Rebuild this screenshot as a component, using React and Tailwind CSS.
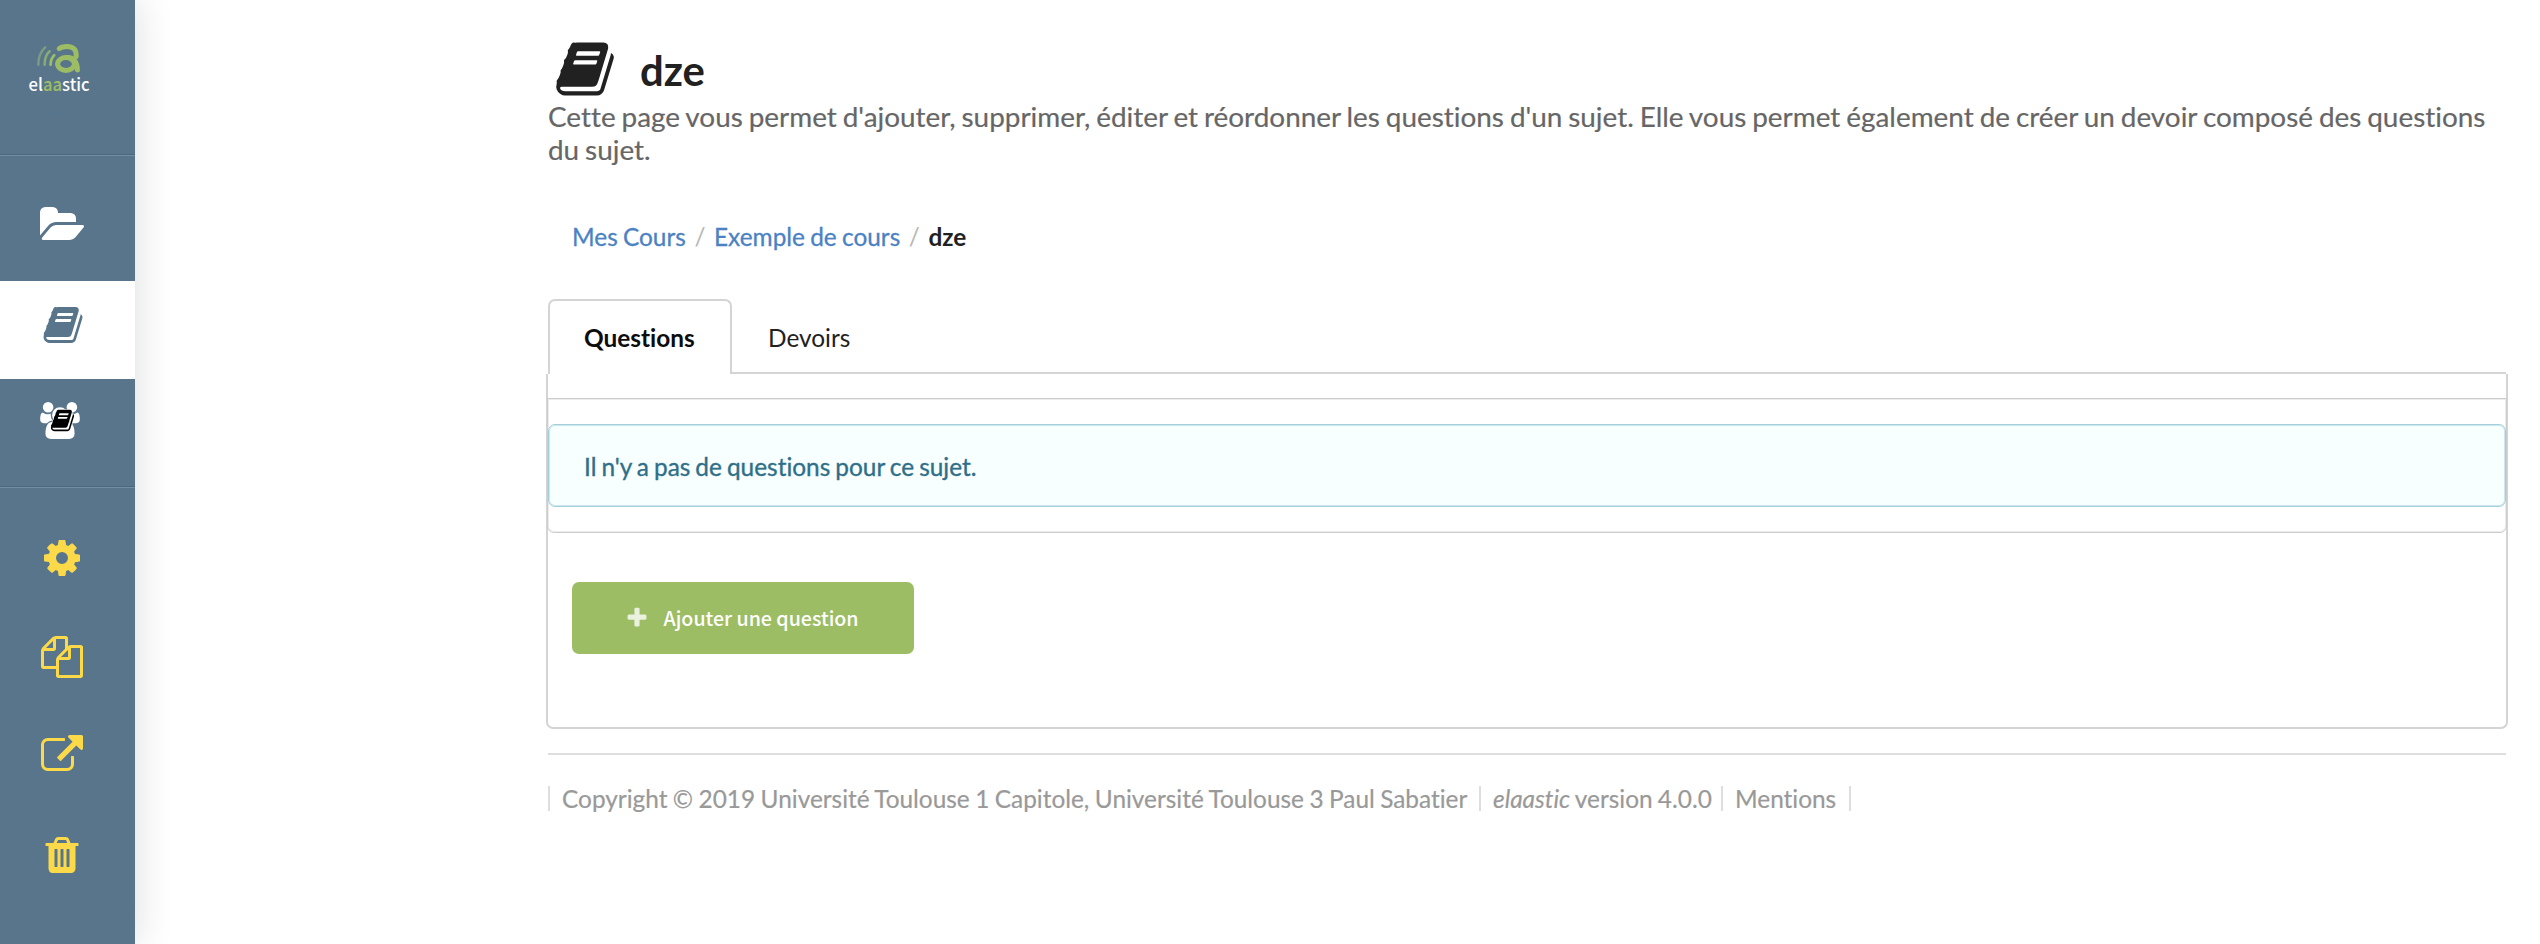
const ICONS = {
  book: "M1703 478q40 57 18 129l-275 906q-19 64-76.5 107.5t-122.5 43.5h-923q-77 0-148.5-53.5t-99.5-131.5q-24-67-2-127 0-4 3-27t4-37q1-8-3-21.5t-3-19.5q2-11 8-21t16.5-23.5 16.5-23.5q23-38 45-91.5t30-91.5q3-10 .5-30t-.5-28q3-11 17-28t17-23q21-36 42-92t25-90q1-9-2.5-32t.5-28q4-13 22-30.5t22-22.5q19-26 42.5-84.5t27.5-96.5q1-8-3-25.5t-2-26.5q2-8 9-18t18-23 17-21q8-12 16.5-30.5t15-35 16-36 19.5-32 26.5-23.5 36-11.5 47.5 5.5l-1 3q38-9 51-9h761q74 0 114 56t18 130l-274 906q-36 119-71.5 153.5t-128.5 34.5h-869q-27 0-38 15-11 16-1 43 24 70 144 70h923q29 0 56-15.5t35-41.5l300-987q7-22 5-57 38 15 59 43zm-1064 2q-4 13 2 22.5t20 9.5h608q13 0 25.5-9.5t16.5-22.5l21-64q4-13-2-22.5t-20-9.5h-608q-13 0-25.5 9.5t-16.5 22.5zm-83 256q-4 13 2 22.5t20 9.5h608q13 0 25.5-9.5t16.5-22.5l21-64q4-13-2-22.5t-20-9.5h-608q-13 0-25.5 9.5t-16.5 22.5z",
  folder: "M1879 952q0 31-31 66l-336 396q-43 51-120.5 86.5t-143.5 35.5h-1088q-34 0-60.5-13t-26.5-43q0-31 31-66l336-396q43-51 120.5-86.5t143.5-35.5h1088q34 0 60.5 13t26.5 43zm-343-344v160h-832q-94 0-197 47.5t-164 119.5l-337 396-5 6q0-4-.5-12.5t-.5-12.5v-960q0-92 66-158t158-66h320q92 0 158 66t66 158v32h544q92 0 158 66t66 158z",
  cog: "M1152 896q0-106-75-181t-181-75-181 75-75 181 75 181 181 75 181-75 75-181zm512-109v222q0 12-8 23t-20 13l-185 28q-19 54-39 91 35 50 107 138 10 12 10 25t-9 23q-27 37-99 108t-94 71q-12 0-26-9l-138-108q-44 23-91 38-16 136-29 186-7 28-36 28h-222q-14 0-24.5-8.5t-11.5-21.5l-28-184q-49-16-90-37l-141 107q-10 9-25 9-14 0-25-11-126-114-165-168-7-10-7-23 0-12 8-23 15-21 51-66.5t54-70.5q-27-50-41-99l-183-27q-13-2-21-12.5t-8-23.5v-222q0-12 8-23t19-13l186-28q14-46 39-92-40-57-107-138-10-12-10-24 0-10 9-23 26-36 98.5-107.5t94.5-71.5q13 0 26 10l138 107q44-23 91-38 16-136 29-186 7-28 36-28h222q14 0 24.5 8.5t11.5 21.5l28 184q49 16 90 37l142-107q9-9 24-9 13 0 25 10 129 119 165 170 7 8 7 22 0 12-8 23-15 21-51 66.5t-54 70.5q26 50 41 98l183 28q13 2 21 12.5t8 23.5z",
  copy: "M1696 384q40 0 68 28t28 68v1216q0 40-28 68t-68 28h-960q-40 0-68-28t-28-68v-288h-544q-40 0-68-28t-28-68v-672q0-40 20-88t48-76l408-408q28-28 76-48t88-20h416q40 0 68 28t28 68v328q68-40 128-40h416zm-544 213l-299 299h299v-299zm-640-384l-299 299h299v-299zm196 647l316-316v-416h-384v416q0 40-28 68t-68 28h-416v640h512v-256q0-40 20-88t48-76zm956 804v-1152h-384v416q0 40-28 68t-68 28h-416v640h896z",
  share: "M1408 928v320q0 119-84.5 203.5t-203.5 84.5h-832q-119 0-203.5-84.5t-84.5-203.5v-832q0-119 84.5-203.5t203.5-84.5h704q14 0 23 9t9 23v64q0 14-9 23t-23 9h-704q-66 0-113 47t-47 113v832q0 66 47 113t113 47h832q66 0 113-47t47-113v-320q0-14 9-23t23-9h64q14 0 23 9t9 23zm384-864v512q0 26-19 45t-45 19-45-19l-176-176-652 652q-10 10-23 10t-23-10l-114-114q-10-10-10-23t10-23l652-652-176-176q-19-19-19-45t19-45 45-19h512q26 0 45 19t19 45z",
  trash: "M704 1376v-704q0-14-9-23t-23-9h-64q-14 0-23 9t-9 23v704q0 14 9 23t23 9h64q14 0 23-9t9-23zm256 0v-704q0-14-9-23t-23-9h-64q-14 0-23 9t-9 23v704q0 14 9 23t23 9h64q14 0 23-9t9-23zm256 0v-704q0-14-9-23t-23-9h-64q-14 0-23 9t-9 23v704q0 14 9 23t23 9h64q14 0 23-9t9-23zm-544-992h448l-48-117q-7-9-17-11h-317q-10 2-17 11zm928 32v64q0 14-9 23t-23 9h-96v948q0 83-47 143.5t-113 60.5h-832q-66 0-113-58.5t-47-141.5v-952h-96q-14 0-23-9t-9-23v-64q0-14 9-23t23-9h309l70-167q15-37 54-63t79-26h320q40 0 79 26t54 63l70 167h309q14 0 23 9t9 23z",
  users: "M593 896q-162 5-265 128h-134q-82 0-138-40.5t-56-118.5q0-353 124-353 6 0 43.5 21t97.5 42.5 119 21.5q67 0 133-23-5 37-5 66 0 139 81 256zm1071 637q0 120-73 189.5t-194 69.5h-874q-121 0-194-69.5t-73-189.5q0-53 3.5-103.5t14-109 26.5-108.5 43-97.5 62-81 85.5-53.5 111.5-20q10 0 43 21.5t73 48 107 48 135 21.5 135-21.5 107-48 73-48 43-21.5q61 0 111.5 20t85.5 53.5 62 81 43 97.5 26.5 108.5 14 109 3.5 103.5zm-1024-1277q0 106-75 181t-181 75-181-75-75-181 75-181 181-75 181 75 75 181zm704 384q0 159-112.5 271.5t-271.5 112.5-271.5-112.5-112.5-271.5 112.5-271.5 271.5-112.5 271.5 112.5 112.5 271.5zm576 225q0 78-56 118.5t-138 40.5h-134q-103-123-265-128 81-117 81-256 0-29-5-66 66 23 133 23 59 0 119-21.5t97.5-42.5 43.5-21q124 0 124 353zm-128-609q0 106-75 181t-181 75-181-75-75-181 75-181 181-75 181 75 75 181z",
  plus: "M1600 736v192q0 40-28 68t-68 28h-416v416q0 40-28 68t-68 28h-192q-40 0-68-28t-28-68v-416h-416q-40 0-68-28t-28-68v-192q0-40 28-68t68-28h416v-416q0-40 28-68t68-28h192q40 0 68 28t28 68v416h416q40 0 68 28t28 68z",
};

function Icon({ name, wide = false, className = "" }) {
  return (
    <svg
      viewBox={wide ? "0 0 1920 1792" : "0 0 1792 1792"}
      fill="currentColor"
      aria-hidden="true"
      className={`shrink-0 overflow-visible ${className}`}
    >
      <path d={ICONS[name]} />
    </svg>
  );
}

function Logo() {
  return (
    <svg viewBox="0 0 90 90" className="ml-3.5 h-[90px] w-[90px]" role="img" aria-label="elaastic">
      <circle cx="45" cy="45" r="41" fill="none" stroke="#557d9c" strokeWidth="0.7" strokeDasharray="5 3" opacity="0.7" />
      <g fill="none" strokeLinecap="round">
        <path d="M24.3 36.8C24.3 29 26.3 23.5 31.2 19.3" stroke="#7b9d80" strokeWidth="2.4" />
        <path d="M30.6 36.8C30.6 31 32 26.5 35.6 23.3" stroke="#8aac74" strokeWidth="2.5" />
        <path d="M36.6 36.8C36.6 33 37.6 29.8 40.2 27.2" stroke="#9bbf63" strokeWidth="2.7" />
        <path d="M45.2 20.6C47 19 50 18.4 53 18.4C60 18.4 62.6 22.5 62.2 28.5" stroke="#9dbd64" strokeWidth="5" />
        <ellipse cx="52" cy="36" rx="8.4" ry="6.4" stroke="#9dbd64" strokeWidth="5" />
        <path d="M53 29.6C60 29.4 63.3 34 63.4 42" stroke="#9dbd64" strokeWidth="5" />
      </g>
      <text x="14.6" y="63" fill="#fff" fontSize="17.2" fontWeight="500" fontFamily="'Noto Sans CJK SC', sans-serif" textLength="61" lengthAdjust="spacingAndGlyphs">
        el<tspan fill="#9dbd64">aa</tspan>stic
      </text>
    </svg>
  );
}

function Sidebar() {
  return (
    <aside className="h-full w-[135px] shrink-0 bg-[#58758c] shadow-[0_0_36px_rgba(34,36,38,0.16)]">
      <div className="h-[155px] border-b border-[#4a6880] pt-7">
        <Logo />
      </div>
      <nav className="flex flex-col">
        <a className="flex h-[126px] justify-center border-t border-[#748da1] pr-2.5 pt-[48px] text-white">
          <Icon name="folder" wide className="h-[42px] w-[45px]" />
        </a>
        <a className="flex h-[98px] justify-center bg-white pr-2.5 pt-[22.5px] text-[#58758c]">
          <Icon name="book" className="size-[42px]" />
        </a>
        <a className="flex h-[108px] border-b border-[#4a6880] pl-[39.5px] pt-[23px] text-white">
          <span className="relative h-[37px] w-[40px]">
            <Icon name="users" wide className="h-[37px] w-[40px]" />
            <Icon name="book" className="absolute left-[10px] top-[6px] size-[25px] stroke-white stroke-[90px] text-black [paint-order:stroke]" />
          </span>
        </a>
        <a className="flex h-[101px] justify-center border-t border-[#748da1] pr-[11px] pt-[48.5px] text-[#fbd949]">
          <Icon name="cog" className="size-[42px]" />
        </a>
        <a className="flex h-[99px] justify-center pr-[11px] pt-[48px] text-[#fbd949]">
          <Icon name="copy" className="size-[42px]" />
        </a>
        <a className="flex h-[99px] justify-center pr-[11px] pt-[48px] text-[#fbd949]">
          <Icon name="share" className="size-[42px]" />
        </a>
        <a className="flex h-[99px] justify-center pr-[11px] pt-[48px] text-[#fbd949]">
          <Icon name="trash" className="size-[42px]" />
        </a>
      </nav>
    </aside>
  );
}

function Header() {
  return (
    <header>
      <div className="flex h-[100px] items-start pl-1.5 pt-[37.5px] text-[#212121]">
        <Icon name="book" className="size-[62px]" />
        <h1 className="ml-6 mt-[8px] text-[41.8px] font-bold leading-[49px]">dze</h1>
      </div>
      <p className="h-[122px] text-[27.9px] leading-[33px] text-[#666] [-webkit-text-stroke:0.2px_#666] [word-spacing:-1.2px]">
        Cette page vous permet d'ajouter, supprimer, éditer et réordonner les questions d'un sujet. Elle vous permet
        également de créer un devoir composé des questions du sujet.
      </p>
    </header>
  );
}

function Breadcrumb() {
  return (
    <nav className="flex h-[77px] gap-[8.6px] pl-6 text-[#4a82c3]">
      <a className="[-webkit-text-stroke:0.3px_#4a82c3]">Mes Cours</a>
      <span className="text-[#b8b8b8]">/</span>
      <a className="[-webkit-text-stroke:0.3px_#4a82c3]">Exemple de cours</a>
      <span className="text-[#b8b8b8]">/</span>
      <span className="font-bold text-[#212121]">dze</span>
    </nav>
  );
}

function Tabs() {
  return (
    <div className="flex h-[75px]">
      <a className="flex w-[184px] rounded-t-[7px] border-2 border-b-0 border-[#d4d4d5] pl-[34px] pt-[22px] font-bold text-[#0d0d0d]">
        Questions
      </a>
      <a className="flex flex-1 border-b-2 border-[#d4d4d5] pl-[36px] pt-6 text-[#212121]">Devoirs</a>
    </div>
  );
}

function Panel() {
  return (
    <section className="-mx-0.5 h-[355px] rounded-b-[7px] border-2 border-t-0 border-[#d4d4d5] pt-6">
      <div className="-mx-px h-[135px] rounded-b-[7px] border border-[#cdcdce] pt-[25px] shadow-[inset_0_0_0_1px_#ececec]">
        <div className="flex h-[83px] items-center rounded-[7px] border border-[#a3d0db] bg-[#f8ffff] pl-[35px] pt-px text-[#2f6f89] shadow-[inset_0_0_0_1px_#cde7ed] [-webkit-text-stroke:0.35px_#2f6f89] [word-spacing:-1.2px]">
          Il n'y a pas de questions pour ce sujet.
        </div>
      </div>
      <button className="ml-6 mt-[49px] flex h-[72px] w-[342px] items-center rounded-[7px] bg-[#9dbd64] pl-[52.5px] font-['Noto_Sans_CJK_SC',sans-serif] text-[19.6px] font-medium text-white [word-spacing:0px]">
        <Icon name="plus" className="size-[24px] text-[#ebf1df]" />
        <span className="-mt-px ml-[15px] whitespace-nowrap">Ajouter une question</span>
      </button>
    </section>
  );
}

function Divider() {
  return <span className="h-[25px] w-0.5 shrink-0 bg-[#dededf]" />;
}

function Footer() {
  return (
    <footer className="mt-6 flex items-center border-t-2 border-[#dededf] pt-[29px] text-[#999] [-webkit-text-stroke:0.2px_#999]">
      <Divider />
      <span className="w-[929px] whitespace-nowrap pl-3 [word-spacing:-0.8px]">
        Copyright © 2019 Université Toulouse 1 Capitole, Université Toulouse 3 Paul Sabatier
      </span>
      <Divider />
      <span className="w-[240px] whitespace-nowrap pl-3">
        <em>elaastic</em> version 4.0.0
      </span>
      <Divider />
      <span className="w-[126px] pl-3">Mentions</span>
      <Divider />
    </footer>
  );
}

export default function App() {
  return (
    <div className="flex h-[944px] w-[2540px] overflow-hidden bg-white font-[Lato,sans-serif] text-[24.4px] leading-[29px] [font-variant-ligatures:none] [word-spacing:-1px]">
      <Sidebar />
      <main className="ml-[413px] w-[1958px]">
        <Header />
        <Breadcrumb />
        <Tabs />
        <Panel />
        <Footer />
      </main>
    </div>
  );
}
